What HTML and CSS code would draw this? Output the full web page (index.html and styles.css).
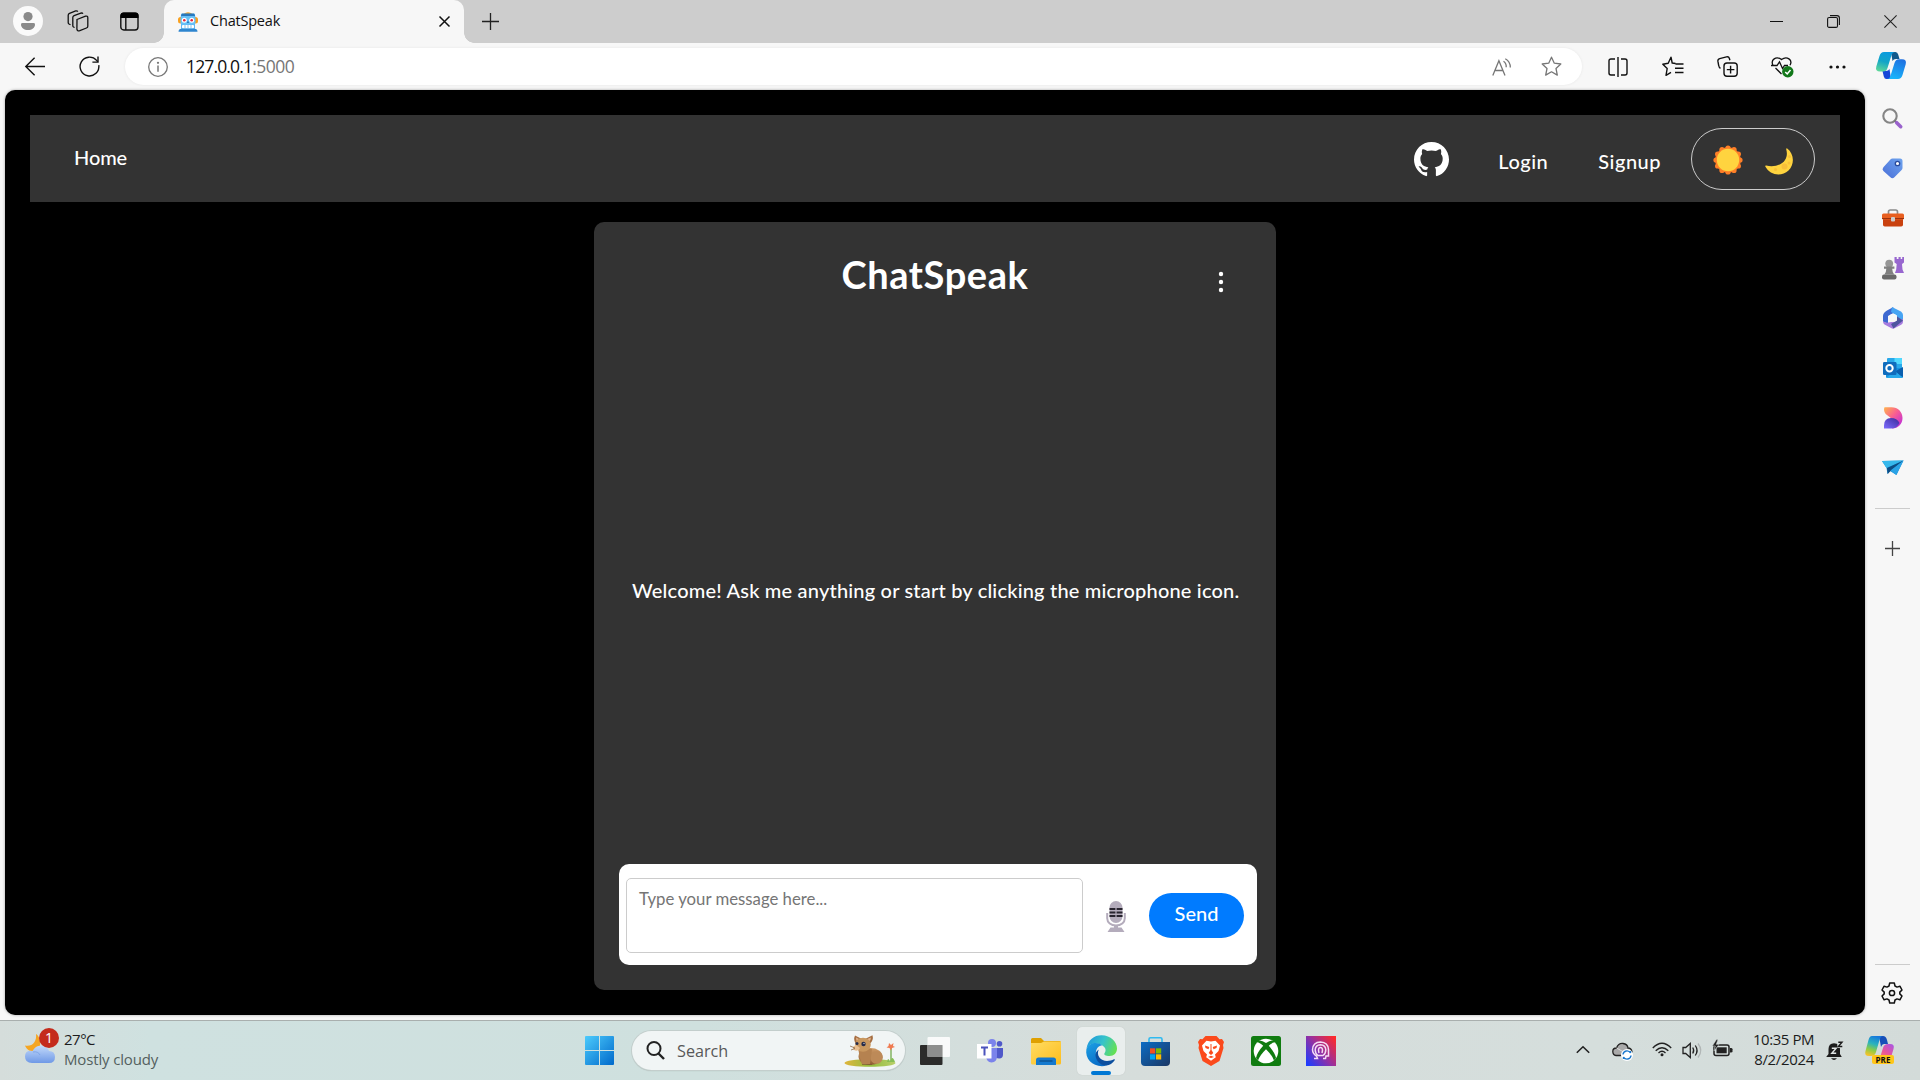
FILE: index.html
```html
<!DOCTYPE html>
<html lang="en">
<head>
<meta charset="utf-8">
<title>ChatSpeak</title>
<link rel="stylesheet" href="styles.css">
</head>
<body>
<div class="tabbar">
  <div class="slot avatar-slot"><span class="avatar"><svg width="16" height="18" viewBox="0 0 16 18" fill="#8a8a8a"><circle cx="8" cy="4.6" r="4.6"/><path d="M1 12.4q0-1.4 1.5-1.4h11q1.5 0 1.5 1.4c0 3.500-3.200 5.600-7 5.600s-7-2.100-7-5.600z"/></svg></span></div>
  <div class="slot"><svg width="22" height="22" viewBox="0 0 22 22" fill="none" stroke="#111" stroke-width="1.300"><path d="M10 9.500 18.500 6.200q2.300-.6 2.300 1.600v8.400q0 1.300-1.300 1.800l-6.700 2.700q-2.600.9-2.900-1.500z"/><path d="M7.600 17.500 6.500 17q-.7-.5-.7-1.500V7.600q0-1.400 1.300-1.900l6.700-2.600q1.500-.4 2.100.7"/><path d="M3.500 14.800 2 14q-.8-.5-.8-1.500V5.200q0-1.400 1.300-1.900L8.700.9q1.500-.4 2.100.7"/></svg></div>
  <div class="slot wide"><svg width="19" height="19" viewBox="0 0 19 19"><rect x=".8" y="1.200" width="17.200" height="16.800" rx="3" fill="none" stroke="#111" stroke-width="1.400"/><path d="M.5 6V3.500Q.5.5 3.500.5h12q3 0 3 3V6z"/><path d="M5.800 6v12" stroke="#111" stroke-width="1.400"/></svg></div>
  <div class="tab">
    <svg width="20" height="20" viewBox="0 0 20 20"><rect x="0" y="5" width="20" height="6.500" rx="2.500" fill="#f9a01e"/><path d="M5.500 2Q10-1.500 14.500 2z" fill="#f9a01e"/><path d="M3 1.800h14V17H3z" fill="#5fb8f4"/><path d="M2.600 4.500 4 1.500h12l1.400 3z" fill="#2878bd"/><rect x="2.500" y="4" width="15" height="8.500" rx="2" fill="#67c0f7"/><circle cx="6.300" cy="8.200" r="2.500" fill="#fff"/><circle cx="13.700" cy="8.200" r="2.500" fill="#fff"/><circle cx="6.300" cy="8.200" r="1.300" fill="#e5243b"/><circle cx="13.700" cy="8.200" r="1.300" fill="#e5243b"/><path d="M10 8.500 11.200 11H8.800z" fill="#2878bd"/><rect x="4" y="13" width="12" height="3.200" rx="1" fill="#fff"/><path d="M7 13v3.200M10 13v3.200M13 13v3.200" stroke="#5aa9df" stroke-width=".7"/><path d="M.5 19.800q0-3 3-3h13q3 0 3 3z" fill="#2f86cf"/></svg>
    <span class="tab-title">ChatSpeak</span>
    <svg width="11" height="11" viewBox="0 0 11 11" stroke="#111" stroke-width="1.500"><path d="M.5.5l10 10M10.500.5l-10 10"/></svg>
  </div>
  <div class="slot newtab"><svg width="17" height="17" viewBox="0 0 17 17" stroke="#222" stroke-width="1.300"><path d="M8.500 0v17M0 8.500h17"/></svg></div>
  <div class="window-controls">
    <svg width="13" height="13" viewBox="0 0 13 13" stroke="#111"><path d="M0 6.500h13"/></svg>
    <svg width="13" height="13" viewBox="0 0 13 13" fill="none" stroke="#111" stroke-width="1.100"><rect x=".6" y="2.500" width="9.900" height="9.900" rx="1.500"/><path d="M3 .6h7q2.400 0 2.400 2.400v7"/></svg>
    <svg width="13" height="13" viewBox="0 0 13 13" stroke="#222" stroke-width="1.100"><path d="M.4.4l12.200 12.200M12.600.4.4 12.600"/></svg>
  </div>
</div>

<div class="toolbar">
  <div class="slot back"><svg width="20" height="19" viewBox="0 0 20 19" fill="none" stroke="#111" stroke-width="1.400"><path d="M20 9.500H.8M9.600.8.8 9.500l8.800 8.700"/></svg></div>
  <div class="slot reload"><svg width="21" height="21" viewBox="0 0 21 21" fill="none" stroke="#111" stroke-width="1.400"><path d="M19.800 9.200a9.400 9.400 0 1 1-2.200-4.800l1.200 1.400"/><path d="M19 .5v5.600h-5.600"/></svg></div>
  <div class="address">
    <svg class="info" width="20" height="20" viewBox="0 0 20 20" fill="none" stroke="#777" stroke-width="1.300"><circle cx="10" cy="10" r="9.300"/><path d="M10 8.500v6.300" stroke-width="1.500"/><circle cx="10" cy="5.800" r=".5"/></svg>
    <span class="url">127.0.0.1</span><span class="port">:5000</span>
    <svg class="read" width="20" height="18" viewBox="0 0 20 18" fill="none" stroke="#767676" stroke-width="1.300"><path d="M.8 17.500 6.900 2.800 13 17.500M3 12.500h7.800M11.500 3.200q3 2 2.700 6M13.300.7q5.200 3 5 8.800"/></svg>
    <svg class="star" width="21" height="21" viewBox="0 0 21 21" fill="none" stroke="#767676" stroke-width="1.300" stroke-linejoin="round"><path d="M10.500 1.200 13.300 7.200l6.500.8-4.800 4.500 1.300 6.600-5.800-3.300-5.800 3.300L6 12.500 1.200 8l6.500-.8z"/></svg>
  </div>
  <div class="tools">
    <svg width="20" height="20" viewBox="0 0 20 20" fill="none" stroke="#111" stroke-width="1.400"><path d="M7 2H3Q1 2 1 4v12q0 2 2 2h4M13 2h4q2 0 2 2v12q0 2-2 2h-4M10 0v20"/></svg>
    <svg width="22" height="21" viewBox="0 0 22 21" fill="none" stroke="#111" stroke-width="1.400" stroke-linejoin="round"><path d="M13.500 7.500 10.200 7 9 1.200 6.200 7.200.8 8.200l4.400 4.300-1.200 6.800 5-2.900M13.500 8h8M13 12.300h8.500M13 16.500h8.500"/></svg>
    <svg width="21" height="21" viewBox="0 0 21 21" fill="none" stroke="#111" stroke-width="1.400"><path d="M3.500 12.300Q2 11.500 1.700 9.500L.9 5.200Q.6 3.200 2.700 2.600L9.500.9q2.300-.5 2.900 1.600l.5 1.800"/><rect x="7" y="7" width="13.200" height="13.200" rx="3"/><path d="M13.600 9.800v7.600M9.800 13.600h7.600"/></svg>
    <svg width="23" height="22" viewBox="0 0 23 22" fill="none" stroke="#111" stroke-width="1.300"><path d="M2 9.200C-.7 4 5-.6 10.500 3.600 16-.6 22 4 19 9.200M4.500 12l6 6M0 9.500h6l2.500-3.700 3 6.700 2-3h3.500"/><circle cx="16.800" cy="15.800" r="5.700" fill="#12781a" stroke="none"/><path d="m14.200 16 2 1.900 3.300-3.800" stroke="#fff" stroke-width="1.500"/></svg>
    <svg width="17" height="4" viewBox="0 0 17 4" fill="#111"><circle cx="2" cy="2" r="1.600"/><circle cx="8.500" cy="2" r="1.600"/><circle cx="15" cy="2" r="1.600"/></svg>
    <svg class="copilot-logo" width="30" height="27" viewBox="0 0 30 27"><defs><linearGradient id="ca" x1=".6" y1="0" x2=".3" y2="1"><stop stop-color="#0a9be0"/><stop offset=".5" stop-color="#12a5c8"/><stop offset="1" stop-color="#5bd69a"/></linearGradient><linearGradient id="cb" x1=".8" y1="0" x2=".4" y2="1"><stop stop-color="#1f6fe0"/><stop offset="1" stop-color="#19b5fb"/></linearGradient></defs><path d="M15 0h4.500q2 0 2.700 2.500L23.500 7H20q-2.500 0-3.500 2z" fill="#125a8c"/><path d="M15 27h-4.500q-2 0-2.700-2.500L6.500 19H10q2.500 0 3.500-2z" fill="#1546d8"/><path d="M8 0h11q-2.500 0-3.300 2.500L11.500 16q-1 3.500-4.500 3.500H4q-5 0-3.700-5L3.500 4Q4.700 0 8 0z" fill="url(#ca)"/><path d="M22 27H11q2.500 0 3.300-2.500L18.500 11q1-3.800 4.500-3.800h3q5 0 3.700 5L26.500 23q-1.200 4-4.500 4z" fill="url(#cb)"/></svg>
  </div>
</div>

<div class="browser-body">
  <main class="page">
    <nav class="navbar">
      <a class="home">Home</a>
      <svg class="github" width="35" height="35" viewBox="0 0 16 16" fill="#fff"><path d="M8 0C3.580 0 0 3.580 0 8c0 3.540 2.290 6.530 5.470 7.590.4.070.55-.17.55-.38 0-.19-.01-.82-.01-1.490-2.010.37-2.530-.49-2.690-.94-.09-.23-.48-.94-.82-1.130-.28-.15-.68-.52-.01-.53.63-.01 1.080.58 1.230.82.72 1.210 1.870.87 2.330.66.070-.52.28-.87.51-1.070-1.780-.2-3.640-.89-3.640-3.950 0-.87.31-1.590.82-2.150-.08-.2-.36-1.020.08-2.120 0 0 .67-.21 2.200.82.64-.18 1.320-.27 2-.27s1.360.09 2 .27c1.530-1.040 2.200-.82 2.200-.82.44 1.100.16 1.920.08 2.120.51.56.82 1.270.82 2.150 0 3.070-1.870 3.750-3.650 3.950.29.25.54.73.54 1.480 0 1.070-.01 1.930-.01 2.200 0 .21.15.46.55.38A8.010 8.010 0 0 0 16 8c0-4.420-3.580-8-8-8z"/></svg>
      <a class="login">Login</a>
      <a class="signup">Signup</a>
      <div class="theme-toggle">
        <svg width="30" height="30" viewBox="0 0 30 30"><g fill="#ff7f27"><circle cx="15" cy="15" r="12.800"/><circle cx="15" cy="3" r="2.600"/><circle cx="21" cy="4.600" r="2.600"/><circle cx="25.400" cy="9" r="2.600"/><circle cx="27" cy="15" r="2.600"/><circle cx="25.400" cy="21" r="2.600"/><circle cx="21" cy="25.400" r="2.600"/><circle cx="15" cy="27" r="2.600"/><circle cx="9" cy="25.400" r="2.600"/><circle cx="4.600" cy="21" r="2.600"/><circle cx="3" cy="15" r="2.600"/><circle cx="4.600" cy="9" r="2.600"/><circle cx="9" cy="4.600" r="2.600"/></g><circle cx="15" cy="15" r="11.200" fill="#ffd43f"/></svg>
        <svg class="moon" width="28" height="27" viewBox="0 0 28 27"><path d="M22.200.4C29 5.500 30 16 23.500 22.500 16.500 29 5 27.500.3 18.500q-.3-1.200.9-.9C9 19.500 17 17 20 12c2.300-3.800 2.200-7 1.200-10.800q0-1.200 1-.8z" fill="#ffd43f"/><g fill="#f8c03a"><circle cx="24.500" cy="8.500" r="1.600"/><circle cx="24" cy="15" r="1.500"/><circle cx="19.500" cy="18.500" r="3"/><circle cx="10.500" cy="21.500" r="1.600"/></g></svg>
      </div>
    </nav>
    <section class="chat">
      <header class="chat-header">
        <h1>ChatSpeak</h1>
        <svg class="menu" width="6" height="22" viewBox="0 0 6 22" fill="#fff"><circle cx="3" cy="3" r="2.200"/><circle cx="3" cy="11" r="2.200"/><circle cx="3" cy="19" r="2.200"/></svg>
      </header>
      <div class="messages"><p>Welcome! Ask me anything or start by clicking the microphone icon.</p></div>
      <div class="composer">
        <div class="message-input">Type your message here...</div>
        <svg class="mic" width="20" height="31" viewBox="0 0 20 31"><path d="M1.200 12v5.200C1.200 21.500 5 24.500 10 24.500s8.800-3 8.800-7.300V12" fill="none" stroke="#b4acbc" stroke-width="2"/><rect x="3.500" y="0" width="13" height="22" rx="6.500" fill="#b4acbc"/><path d="M3.500 8h13M3.500 11.500h13M3.500 15h13" stroke="#28242f" stroke-width="1.800"/><path d="M10 6v11" stroke="#b4acbc" stroke-width="1.200"/><path d="M8 24h4v2.500h3.500l3 4.500h-17l3-4.500H8z" fill="#b4acbc"/></svg>
        <button class="send">Send</button>
      </div>
    </section>
  </main>
  <aside class="sidebar">
    <div class="side-item"><svg width="21" height="21" viewBox="0 0 21 21" fill="none"><circle cx="8" cy="8" r="6.700" stroke="#858585" stroke-width="2.100"/><path d="M12.500 12.500 15 15" stroke="#777" stroke-width="2"/><path d="m14.700 14.700 4 4" stroke="#9a62cc" stroke-width="3.600" stroke-linecap="round"/></svg></div>
    <div class="side-item"><svg width="21" height="21" viewBox="0 0 21 21"><defs><linearGradient id="tg" x1="1" y1="0" x2="0" y2="1"><stop stop-color="#6ea3ee"/><stop offset="1" stop-color="#4a6fd8"/></linearGradient></defs><path d="M10.500.5H18q2.500 0 2.500 2.500v7q0 1.200-.9 2.100l-7.200 7.200q-2 2-4 0l-7-6.200q-1.800-1.900 0-3.800L8.400 1.400q.9-.9 2.100-.9z" fill="url(#tg)"/><circle cx="15.500" cy="5.500" r="2.200" fill="#fff" stroke="#294a9c" stroke-width="1.300"/></svg></div>
    <div class="side-item"><svg width="22" height="18" viewBox="0 0 22 18"><path d="M6.500 5V2.800Q6.500 1 8.300 1h5.400q1.800 0 1.800 1.800V5" fill="none" stroke="#8b8b8b" stroke-width="1.700"/><rect x="1" y="5" width="20" height="12.500" rx="1.800" fill="#c9410f"/><rect x="0" y="4.500" width="22" height="6" rx="1.500" fill="#e85f20"/><path d="M0 9.500h22" stroke="#9d320c"/><rect x="9" y="8" width="4" height="4.500" rx="1" fill="#ccc"/></svg></div>
    <div class="side-item"><svg width="22" height="23" viewBox="0 0 22 23"><path d="M12.500 0h2.200v2h1.800V0h2.200v2h1.500V0H22v5.500l-2 1.500.5 5.500 1.500 3.500h-9l1.200-3.500.5-5.500-2.200-1.500z" fill="#9867cf"/><circle cx="7.200" cy="6.600" r="3.900" fill="#969696"/><path d="M2 9.500h10.400v2.300h-2.200q.2 4 2 5.700H2.400q1.800-1.700 1.900-5.700H2z" fill="#808080"/><rect x="0" y="17.500" width="14.500" height="5" rx="2" fill="#696969"/></svg></div>
    <div class="side-item"><svg width="20" height="22" viewBox="0 0 20 22"><path d="M10 .3 4 3.500Q0 5.800 0 9v5.500l5 2.500V9l8-4.600z" fill="#3d68d0"/><path d="m9 0 9 4.500Q20 6 20 8v7l-6-2V8.500L8 5z" fill="#47a4f3"/><path d="M20 12v3q0 1.800-1.800 2.800L11.500 21.300q-1.500.8-3 0L1.500 17.500Q0 16.700 0 14.500l4 1.300L14 14z" fill="#a77bdf"/><path d="m20 13.500-9.500 8L8 17l6-3.500v-4z" fill="#4e559f"/><circle cx="10" cy="11" r="4" fill="#f7f7f7"/></svg></div>
    <div class="side-item"><svg width="20" height="20" viewBox="0 0 20 20"><rect x="4" y="0" width="15" height="13" rx="1" fill="#28a8ea"/><path d="M11.500 0H18q1 0 1 1v5h-7.500z" fill="#50d9ff"/><path d="M3 10h17v8.500q0 1.500-1.500 1.500h-14Q3 20 3 18.500z" fill="#1490df"/><path d="m11 14 9-5v10z" fill="#0a5fae"/><path d="m3 20 9-7 8 7z" fill="#28a8ea"/><rect x="0" y="4" width="13.500" height="13" rx="1.200" fill="#0f6cbd"/><circle cx="6.500" cy="10.300" r="3.200" fill="none" stroke="#fff" stroke-width="2"/></svg></div>
    <div class="side-item"><svg width="20" height="22" viewBox="0 0 20 22"><defs><linearGradient id="da" x1="0" y1="0" x2="1" y2="1"><stop stop-color="#ffb44c"/><stop offset=".45" stop-color="#fa5f91"/><stop offset="1" stop-color="#b323e8"/></linearGradient><linearGradient id="db" x1="0" y1="1" x2="1" y2="0"><stop stop-color="#7c6cff"/><stop offset="1" stop-color="#3b2998"/></linearGradient></defs><path d="M1.500.3h7C15 .3 19.500 5 19.500 11S15 21.500 9 21.500V12L4 8Q1 6 1 2z" fill="url(#da)"/><path d="M1 21.500v-3Q1 11 8 11q6 0 8.500 5-2.500 5.500-8.500 5.500z" fill="url(#db)"/></svg></div>
    <div class="side-item"><svg width="22" height="16" viewBox="0 0 22 16"><path d="M0 1 21.500.5 14.500 15 8 11 5.500 14 4.500 8z" fill="#1e91d8"/><path d="M0 1 21.500.5 4.500 8z" fill="#37b8ec"/><path d="M21.500.5 5 8l.7 6L8.500 11z" fill="#0d4d84"/><path d="M21.500.5 8.500 10.500l5.700 4.500z" fill="#2ba3e6"/></svg></div>
    <hr>
    <div class="side-item add"><svg width="15" height="15" viewBox="0 0 15 15" stroke="#444" stroke-width="1.300"><path d="M7.500 0v15M0 7.500h15"/></svg></div>
    <hr class="bottom-rule">
    <div class="side-item gear"><svg width="22" height="22" viewBox="0 0 22 22" fill="none" stroke="#111" stroke-width="1.500" stroke-linejoin="round"><path d="M8.700 1h4.600l.7 3 2 1.100 2.900-.9L21 8l-2.200 2.100v1.800L21 14l-2.100 3.800-2.900-.9-2 1.100-.7 3H8.700L8 18l-2-1.100-2.900.9L1 14l2.200-2.100v-1.800L1 8l2.100-3.800 2.900.9L8 4z"/><circle cx="11" cy="11" r="2.600"/></svg></div>
  </aside>
</div>

<footer class="taskbar">
  <div class="weather">
    <div class="weather-icon"><svg width="30" height="30" viewBox="0 0 30 30"><defs><linearGradient id="wc" x1="0" y1="0" x2="0" y2="1"><stop stop-color="#c2d9fa"/><stop offset="1" stop-color="#6f99e6"/></linearGradient></defs><path d="M11 0C17 4 17 16 9 17 4 17.500 1.500 15 0 11.500 7 13 12 8 11 0z" fill="#f5a623"/><path d="M7 29Q0 29 0 22.500T7.500 17Q11 11 17 12t7 5q6 0 6 6t-6 6z" fill="url(#wc)"/><path d="M8 18q5-1 7 3" fill="none" stroke="#7fa5e8"/></svg><b class="badge">1</b></div>
    <div class="weather-text"><span class="temp">27°C</span><span class="cond">Mostly cloudy</span></div>
  </div>
  <div class="apps">
    <svg class="start" width="29" height="29" viewBox="0 0 29 29"><defs><linearGradient id="st" x1="0" y1="0" x2="1" y2="1"><stop stop-color="#4ccbfc"/><stop offset="1" stop-color="#0069cb"/></linearGradient></defs><path d="M1 0h13v14H0V1Q0 0 1 0zM15 0h13q1 0 1 1v13H15zM0 15h14v14H1q-1 0-1-1zM15 15h14v13q0 1-1 1H15z" fill="url(#st)"/></svg>
    <div class="search">
      <svg width="19" height="19" viewBox="0 0 19 19" fill="none" stroke="#222" stroke-width="2"><circle cx="8" cy="7.500" r="6.500"/><path d="m12.500 12.500 5.500 5.500" stroke-width="2.400"/></svg>
      <span>Search</span>
      <svg class="critter" width="52" height="32" viewBox="0 0 52 32"><defs><linearGradient id="gr"><stop stop-color="#e0b53c"/><stop offset=".5" stop-color="#93bd3e"/><stop offset="1" stop-color="#b9cf6a"/></linearGradient><linearGradient id="fu" x1="0" y1="0" x2="0" y2="1"><stop stop-color="#cf9b66"/><stop offset="1" stop-color="#8f5d33"/></linearGradient></defs><ellipse cx="26" cy="28" rx="25.500" ry="3.800" fill="url(#gr)"/><path d="M47 27V13" stroke="#72a94b" stroke-width="1.300"/><path d="M43 27q1-6 3 0 2-8 5 0z" fill="#86be55"/><path d="m45 8 2 2 2.500-2-.5 3 2 1-3 1-1 2.500-1.500-2.500-3-.5 2-1.500z" fill="#f07a50"/><ellipse cx="26.500" cy="21.500" rx="12" ry="8.500" fill="url(#fu)"/><circle cx="32.500" cy="22.500" r="6.300" fill="#bd8a58"/><path d="M14 12q2 14 4 17h8l2-15z" fill="#b58250"/><path d="M11 .5q-2 4 1 8.500l6-5zM28.500.2q1.500 5-3 9l-5-5z" fill="#a66f43"/><path d="M12 2.500q0 2 1 4l2-2.500zM27 2.500q0 2.500-2 4l-2-2.500z" fill="#e3b28a"/><ellipse cx="19" cy="9.800" rx="7.800" ry="7" fill="#c9985f"/><path d="M12 10q-5 2-2 5 4 2 6-2z" fill="#e8bf91"/><circle cx="13" cy="8.500" r="1.500" fill="#252b4a"/><circle cx="19.500" cy="9" r="2.200" fill="#252b4a"/><circle cx="20" cy="8.300" r=".6" fill="#fff"/><path d="m6 11 5 2M7 15l4-1.500M18 29.500h10" stroke="#7e5735" stroke-width=".7"/></svg>
    </div>
    <svg class="taskview" width="30" height="28" viewBox="0 0 30 28"><rect x="0" y="8" width="22.500" height="20" rx="1" fill="#2b2b2a"/><rect x="7.500" y="0" width="22.500" height="20" rx="1" fill="#fff" fill-opacity=".85"/><path d="M7.500 8h15v12h-15z" fill="#8d8e8d"/></svg>
    <svg class="teams" width="27" height="24" viewBox="0 0 27 24"><circle cx="15" cy="4" r="4" fill="#7b83eb"/><circle cx="22.500" cy="4.800" r="2.800" fill="#5059c9"/><path d="M19 9h7v6.500q0 4-3.800 4T18 16z" fill="#5059c9"/><path d="M9 9h11v8q0 6-5.500 6.500Q9.500 23 9 17z" fill="#7b83eb"/><rect x="0" y="5" width="14.500" height="14.500" fill="#fff"/><path d="M4 8.500h7M7.500 8.500v8" stroke="#4b53bc" stroke-width="2"/></svg>
    <svg class="folder" width="30" height="27" viewBox="0 0 30 27"><path d="M0 1.500Q0 0 1.500 0H10l3 3h15.500Q30 3 30 4.500V12H0z" fill="#dfa000"/><defs><linearGradient id="fo" x1="0" y1="0" x2="1" y2="1"><stop stop-color="#ffdc63"/><stop offset="1" stop-color="#fdbd1d"/></linearGradient></defs><path d="M0 5h10l3-1.500h17V25q0 1.500-1.500 1.500h-27Q0 26.500 0 25z" fill="url(#fo)"/><path d="M5 27v-5q0-2.500 2.500-2.500h15Q25 19.500 25 22v5z" fill="#1479ce"/><path d="M8.500 23h13" stroke="#0b4a86" stroke-width="1.200"/></svg>
    <div class="edge">
      <svg width="31" height="31" viewBox="0 0 31 31"><defs><linearGradient id="e1" x1="0" y1=".3" x2="1" y2=".6"><stop stop-color="#1e98dc"/><stop offset=".5" stop-color="#36c3cb"/><stop offset="1" stop-color="#65e151"/></linearGradient><linearGradient id="e2" x1="0" y1="0" x2=".6" y2="1"><stop stop-color="#1ca0e4"/><stop offset="1" stop-color="#086bc6"/></linearGradient></defs><path d="M.5 13.500C2 5 8 .3 15.500.3 25 .3 31 7 31 13.500c0 4.500-3 7.500-7.500 7.500-4 0-6-1.300-5-2.700 1.800-2.500 1.700-6-3-8.300C9.500 7 3 9 .5 13.500z" fill="url(#e1)"/><path d="M.4 14C3.500 7 12 6.800 16 10.500c-5 .5-6.500 5-6 9 .8 6 6 10.500 11 11C9 33.500-1.500 25.500.4 14z" fill="url(#e2)"/><path d="M12.800 14.500c-3 6 2 11.500 8.200 11.500 2.500 0 5-.7 7-1.700.7-.3 1.100.3.700.9-2 3-5.200 5-8.200 5.300-5.500.5-11-5-11-10.500 0-2 1-4.200 3.300-5.500z" fill="#0c4f9f"/></svg>
      <i></i>
    </div>
    <svg class="store" width="29" height="29" viewBox="0 0 29 29"><defs><linearGradient id="ms" x1="0" y1="0" x2="1" y2="1"><stop stop-color="#0b6cc4"/><stop offset="1" stop-color="#1b3764"/></linearGradient></defs><path d="M8 6V2.300Q8 .8 9.500.8h10q1.500 0 1.500 1.500V6" fill="none" stroke="#2fbaf0" stroke-width="1.600"/><path d="M0 5h29v20q0 4-4 4H4q-4 0-4-4z" fill="url(#ms)"/><path d="M9 11.300h5.200v5.200H9z" fill="#f25022"/><path d="M15 11.300h5.200v5.200H15z" fill="#7fba00"/><path d="M9 17.300h5.200v5.200H9z" fill="#00a4ef"/><path d="M15 17.300h5.200v5.200H15z" fill="#ffb900"/></svg>
    <svg class="brave" width="26" height="30" viewBox="0 0 26 30"><path d="M7.500 0h11l3 3.200L24 3l2 3-1 3 .5 3-4 13L13 30l-8.500-5L.5 12 1 9 0 6l2-3 2.500.2z" fill="#fb4a1c"/><path d="M8.500 4.800 13 5.500l4.500-.7L22 9.500 20.500 15 17 18.500l.8 2.700L13 24.800l-4.800-3.600.8-2.700L5.500 15 4 9.500z" fill="#fff"/><path d="M7 9.500 11.300 11l-.8 2.200L7.500 12zM19 9.500 14.700 11l.8 2.200 3-1.200zM12.500 8h1v6l1.800 3L13 19l-2.300-2 1.800-3zM10 21l3-1.300 3 1.300-3 1z" fill="#fb4a1c"/></svg>
    <svg class="xbox" width="30" height="30" viewBox="0 0 30 30"><rect width="30" height="30" rx="2.500" fill="#107c10"/><circle cx="15" cy="15" r="12.300" fill="#fff"/><path d="M7 4.800Q10 3.500 15 7q5-3.500 8-2.200l1.500 1.500Q22 5.800 17.800 9.800 24 16.500 25 22l-2 2.500Q21 19 15 13.200 9 19 7 24.500L5 22q1-5.500 7.200-12.200Q8 5.800 5.500 6.300z" fill="#107c10"/></svg>
    <svg class="head" width="30" height="30" viewBox="0 0 30 30"><defs><linearGradient id="hg" x1="0" y1=".9" x2="1" y2=".1"><stop stop-color="#1c3cff"/><stop offset=".5" stop-color="#9730a0"/><stop offset="1" stop-color="#ff2929"/></linearGradient></defs><rect width="30" height="30" fill="url(#hg)"/><g fill="none" stroke="#f5dcf5" stroke-width="1.500"><path d="M8 22.500h3.500l-1-2.500Q6.500 17.500 6.500 13.500 7 6.200 14.500 6q7.500.3 8 7.500v6.500h-2.500l-.5 2.500H17"/><path d="M12 19.500q-2.800-2-2.800-5.800Q9.500 9 14.500 8.800q5 .2 5.300 4.900 0 3.800-2.800 5.800z"/><path d="M13 17q-1.500-5.500 1.500-5.500T16 17"/></g></svg>
  </div>
  <div class="tray">
    <svg class="chev" width="14" height="9" viewBox="0 0 14 9" fill="none" stroke="#222" stroke-width="1.600"><path d="m.8 7.800 6.200-6 6.200 6"/></svg>
    <svg class="cloud" width="21" height="19" viewBox="0 0 21 19"><path d="M4 13.500q-3.200-.5-3.200-4T4.500 6Q6.500 1 11 1.500T16 6q3.500 0 4 4l-4 3.500z" fill="#a9a9a9" stroke="#222" stroke-width="1.300"/><path d="m4.500 6 8 4.500" stroke="#ddd"/><circle cx="15" cy="13" r="6" fill="#fff"/><path d="M11 12.500a4 4 0 0 1 7.500-1.500V9M19 13.500a4 4 0 0 1-7.500 1.500V17" fill="none" stroke="#1c79cd" stroke-width="1.400"/></svg>
    <svg class="wifi" width="20" height="15" viewBox="0 0 20 15" fill="none" stroke="#222" stroke-width="1.400"><path d="M.8 6Q10-3.500 19.200 6M3.700 8.700q6.300-6 12.600 0M6.500 11q3.500-3.300 7 0"/><circle cx="10" cy="12.800" r="1.500" fill="#222" stroke="none"/></svg>
    <svg class="sound" width="20" height="17" viewBox="0 0 20 17" fill="none" stroke="#222" stroke-width="1.300"><path d="M1 5.500h2.700L8.300 1.500v14l-4.600-4H1zM10.700 5.500q2 3 0 6M13.300 3.500q3.500 5 0 10"/><path d="M16 1.500q5.500 7 0 14" stroke="#b0b5b5"/></svg>
    <svg class="battery" width="21" height="17" viewBox="0 0 21 17"><rect x="2" y="5" width="15" height="10.500" rx="2" fill="none" stroke="#222" stroke-width="1.500"/><path d="M4.500 7.300h10.200v6H4.500z" fill="#222"/><path d="M18 8h1q1.500 0 1.500 1.300v2q0 1.200-1.500 1.200h-1z" fill="#222"/><path d="M4.500-.5.300 6h3L2 11l5-6.500H4.200L6-.5z" fill="#222" stroke="#d5dddb" stroke-width=".5"/></svg>
    <div class="clock"><span class="time">10:35 PM</span><span class="date">8/2/2024</span></div>
    <svg class="bell" width="18" height="20" viewBox="0 0 18 20"><path d="M2.500 13V8Q2.500 2.500 8 2.200q6 .3 6 5.800v5l1.800 3H.2z" fill="#1c1c1c"/><path d="M5 17.200h6q-3 3.600-6 0z" fill="#1c1c1c"/><path d="M5.800 7.200h4.400l-4.400 5h4.400" fill="none" stroke="#e0e5e4" stroke-width="1.400"/><path d="M11.300 0H18v7h-6.700z" fill="#d6dddb"/><path d="M12.300 1.200h3.700l-3.700 4.300h4" fill="none" stroke="#1c1c1c" stroke-width="1.400"/></svg>
    <div class="copilot"><svg width="29" height="27" viewBox="0 0 29 27"><defs><linearGradient id="c1" x1=".6" y1="0" x2=".3" y2="1"><stop stop-color="#1578dd"/><stop offset=".4" stop-color="#2bb3bd"/><stop offset=".7" stop-color="#8bcc47"/><stop offset="1" stop-color="#f6c22a"/></linearGradient><linearGradient id="c2" x1="1" y1="0" x2=".3" y2="1"><stop stop-color="#a556e8"/><stop offset=".5" stop-color="#e8559d"/><stop offset="1" stop-color="#ff8757"/></linearGradient></defs><path d="M14 0h4q3 0 4 4l1 4h-4q-2 0-3 3z" fill="#174fb8"/><path d="M7 0h11q-2.500 0-3.500 4L11 16q-1 4-5 4H4q-5 0-3.500-5L3.500 4Q4.500 0 7 0z" fill="url(#c1)"/><path d="M22 27H11q2.500 0 3.500-4L18 12q1-4 5-4h2q5 0 3.500 5l-3 10q-1 4-3.500 4z" fill="url(#c2)"/></svg><b>PRE</b></div>
  </div>
</footer>
</body>
</html>
```
FILE: styles.css
```css
* { box-sizing: border-box; }
body {
  margin: 0;
  width: 1920px;
  height: 1080px;
  overflow: hidden;
  display: flex;
  flex-direction: column;
  background: #f7f7f7;
  color: #111;
  font-family: "Open Sans", "Noto Sans", sans-serif;
}
svg { display: block; flex: none; overflow: visible; }
.slot { display: flex; align-items: center; justify-content: center; width: 50px; flex: none; }

/* Tab strip */
.tabbar { height: 43px; padding-left: 3px; padding-bottom: 1px; display: flex; background: #cdcdcd; flex: none; }
.avatar { width: 30px; height: 30px; border-radius: 50%; background: #fafafa; display: flex; align-items: center; justify-content: center; }
.slot.wide { width: 53px; }
.tab {
  position: relative;
  width: 300px;
  height: 43px;
  margin-left: 8px;
  padding: 0 14px;
  display: flex;
  align-items: center;
  background: #f7f7f7;
  border-radius: 10px 10px 0 0;
}
.tab::before, .tab::after { content: ""; position: absolute; bottom: 0; width: 10px; height: 10px; }
.tab::before { left: -10px; background: radial-gradient(circle at 0 0, #cdcdcd 9.500px, #f7f7f7 10px); }
.tab::after { right: -10px; background: radial-gradient(circle at 100% 0, #cdcdcd 9.500px, #f7f7f7 10px); }
.tab-title { flex: 1; margin-left: 12px; font-size: 14.500px; letter-spacing: -.2px; padding-bottom: 2px; }
.slot.newtab { width: 53px; }
.window-controls { margin-left: auto; margin-right: 1px; display: grid; grid-template-columns: repeat(3, 57px); place-items: center; }

/* Toolbar */
.toolbar { height: 47px; padding-left: 8px; display: flex; align-items: center; flex: none; }
.slot.back { width: 54px; }
.slot.reload { width: 55px; }
.address {
  width: 1460px;
  height: 37px;
  margin-left: 8px;
  padding: 0 20px 0 22px;
  display: flex;
  align-items: center;
  background: #fff;
  border-radius: 19px;
  box-shadow: 0 0 3px rgba(0, 0, 0, .07);
  font-size: 17.500px;
}
.info { margin-left: 1px; }
.url { margin-left: 18px; letter-spacing: -.85px; padding-bottom: 1px; }
.port { color: #767676; letter-spacing: -.5px; padding-bottom: 1px; }
.read { margin-left: auto; }
.star { margin-left: 29px; }
.tools { display: grid; grid-template-columns: repeat(6, 55px); place-items: center; padding-left: 8px; }
.tools .copilot-logo { margin-right: 3px; margin-top: -2px; }

/* Web page and the side panel */
.browser-body { display: flex; height: 930px; flex: none; }
.page {
  width: 1860px;
  height: 925px;
  margin-left: 5px;
  padding: 25px;
  background: #000;
  border-radius: 10px;
  box-shadow: 0 0 3px rgba(0, 0, 0, .35);
  color: #fff;
  font-family: Lato, "Open Sans", sans-serif;
  font-weight: 500;
  font-size: 20px;
}
.navbar { height: 87px; padding: 0 25px 0 44px; display: flex; align-items: center; background: #333; }
.home { margin-right: auto; padding-bottom: 3px; letter-spacing: -.1px; }
.github { margin-top: 1px; }
.login { margin-left: 49px; padding-top: 4px; letter-spacing: .5px; }
.signup { margin-left: 50px; padding-top: 4px; letter-spacing: .5px; }
.theme-toggle {
  width: 124px;
  height: 62px;
  margin-left: 30px;
  margin-top: 1px;
  padding: 1px 21px 0;
  display: flex;
  align-items: center;
  justify-content: space-between;
  border: 1px solid #ccc;
  border-radius: 31px;
}
.moon { margin-top: 3px; }
.chat {
  width: 682px;
  height: 768px;
  margin: 20px auto 0;
  padding: 25px 19px 25px 25px;
  display: flex;
  flex-direction: column;
  background: #333;
  border-radius: 10px;
}
.chat-header { height: 70px; padding-left: 33px; padding-right: 33px; display: grid; grid-template-columns: 1fr auto; align-items: start; }
.chat-header h1 { margin: 4px 0 0; text-align: center; font-size: 38px; line-height: 46px; font-weight: 700; letter-spacing: .6px; }
.menu { margin-top: 24px; }
.messages { flex: 1; display: flex; align-items: center; }
.messages p { margin: 0; padding-left: 13px; padding-bottom: 2px; white-space: nowrap; letter-spacing: .19px; }
.composer { height: 101px; padding: 14px 13px 12px 7px; display: flex; align-items: center; background: #fff; border-radius: 10px; }
.message-input {
  width: 457px;
  height: 75px;
  padding: 9px 12px;
  border: 1px solid #ccc;
  border-radius: 5px;
  color: #757575;
  font-weight: 400;
  font-size: 16.750px;
  line-height: 21px;
}
.mic { margin-left: 23px; margin-top: 2px; }
.send {
  width: 95px;
  height: 45px;
  margin-left: auto;
  padding: 0 0 5px;
  border: 0;
  border-radius: 23px;
  background: #007bff;
  color: #fff;
  font: 500 20px Lato, sans-serif;
}

.sidebar { width: 55px; display: flex; flex-direction: column; align-items: center; padding-top: 3px; }
.side-item { height: 50px; display: flex; align-items: center; justify-content: center; flex: none; }
.sidebar hr { width: 35px; height: 1px; margin: 15px 0 0; border: 0; background: #ccc; flex: none; }
.side-item.add { margin-top: 14px; margin-right: 1px; }
.sidebar hr.bottom-rule { margin-top: auto; }
.side-item.gear { height: 55px; margin-right: 1px; }

/* Taskbar */
.taskbar {
  height: 60px;
  display: flex;
  border-top: 1px solid #a9afae;
  background: linear-gradient(90deg, #d5dddb 0, #cfe1e0 150px, #cfe0de 700px, #d6dddb 1100px, #d5dedc 1600px, #d3dbd9 100%);
  flex: none;
}
.weather { width: 585px; padding-left: 25px; display: flex; }
.weather-icon { position: relative; padding-top: 13px; }
.badge {
  position: absolute;
  left: 14px;
  top: 7px;
  width: 20px;
  height: 20px;
  border-radius: 50%;
  background: #c42b1c;
  color: #fff;
  text-align: center;
  font: 400 14px/20px "Open Sans", sans-serif;
}
.weather-text { margin-left: 9px; padding-top: 8px; display: flex; flex-direction: column; font-size: 15px; line-height: 20px; color: #1c1c1c; }
.temp { letter-spacing: -.5px; }
.cond { color: #54605e; letter-spacing: -.15px; }
.apps { width: 991px; display: flex; align-items: center; }
.search {
  width: 273px;
  height: 39px;
  margin-left: 18px;
  padding: 0 9px 0 14px;
  display: flex;
  align-items: center;
  border-radius: 20px;
  background: #f1f5f5;
  box-shadow: 0 0 0 1px #c3cecc, 0 1px 1px #9caaa7;
  color: #585858;
  font-size: 16.200px;
}
.search span { margin-left: 12px; }
.critter { margin-left: auto; margin-top: 1px; }
.taskview { margin-left: 15px; }
.teams { margin-left: 27px; }
.folder { margin-left: 27px; margin-top: 1px; }
.edge { width: 48px; height: 48px; margin-left: 16px; padding-top: 8px; display: flex; flex-direction: column; align-items: center; background: #e9eeed; border-radius: 5px; box-shadow: 0 0 1px #b6bdbb; }
.edge i { width: 20px; height: 4px; margin-top: 5px; border-radius: 2px; background: #0078d4; }
.store { margin-left: 16px; margin-top: 1px; }
.brave { margin-left: 28px; }
.xbox { margin-left: 27px; }
.head { margin-left: 25px; }
.tray { flex: 1; display: flex; align-items: center; }
.chev { margin-top: -2px; }
.cloud { margin-left: 22px; margin-top: 2px; }
.wifi { margin-left: 19px; margin-top: -2px; }
.sound { margin-left: 10px; }
.battery { margin-left: 10px; margin-top: -4px; }
.clock { width: 81px; display: flex; flex-direction: column; align-items: flex-end; font-size: 15px; line-height: 20px; color: #1c1c1c; padding-bottom: 4px; }
.time { letter-spacing: -.45px; }
.date { letter-spacing: -.33px; }
.bell { margin-left: 12px; margin-top: 1px; }
.copilot { position: relative; margin-left: 21px; margin-top: -3px; }
.copilot b {
  position: absolute;
  left: 7px;
  top: 19px;
  width: 22px;
  height: 9px;
  border-radius: 2px;
  background: #ffc61a;
  color: #111;
  text-align: center;
  font: 700 8px/9px "Open Sans", sans-serif;
}
```
